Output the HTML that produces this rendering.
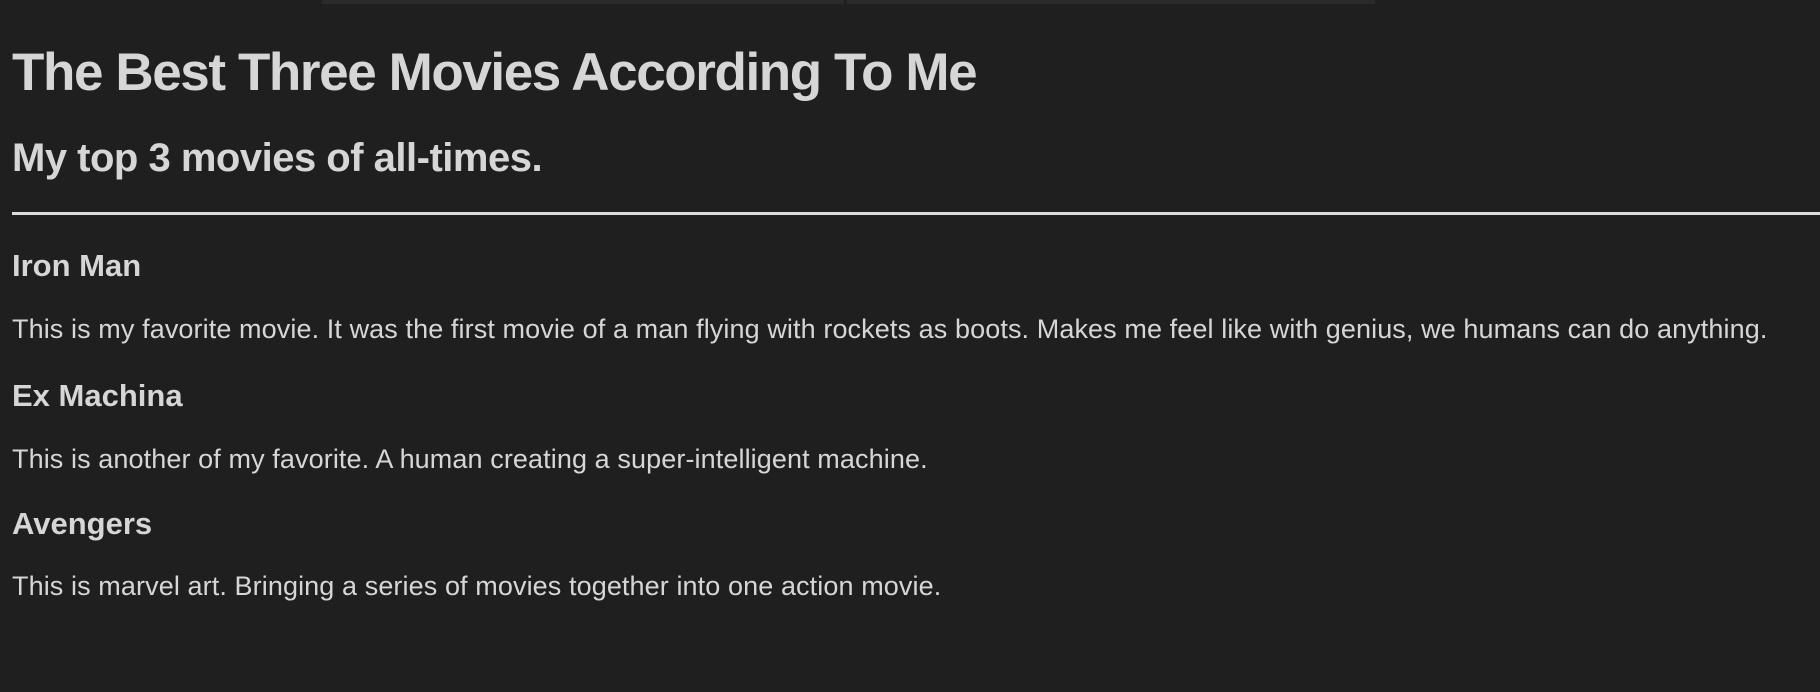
<!DOCTYPE html>
<html><head><meta charset="utf-8"><style>
html,body{margin:0;padding:0;background:#1f1f1f;width:1820px;height:692px;overflow:hidden;position:relative;font-family:"Liberation Sans",Arial,sans-serif;color:#d6d6d6}
.t{position:absolute;left:12px;line-height:1;white-space:nowrap}
.b{font-weight:bold}
</style></head><body>
<div style="position:absolute;left:322px;top:0;width:522px;height:4px;background:#2b2b2b"></div>
<div style="position:absolute;left:847px;top:0;width:528px;height:4px;background:#2b2b2b"></div>
<div class="t b" style="top:46px;font-size:53px;letter-spacing:-1.4px">The Best Three Movies According To Me</div>
<div class="t b" style="top:138px;font-size:40px;letter-spacing:-0.5px">My top 3 movies of all-times.</div>
<div style="position:absolute;left:12px;right:0;top:212px;height:3px;background:#dcdcdc"></div>
<div class="t b" style="top:250px;font-size:31px">Iron Man</div>
<div class="t" style="top:316px;font-size:27px;letter-spacing:0.1px">This is my favorite movie. It was the first movie of a man flying with rockets as boots. Makes me feel like with genius, we humans can do anything.</div>
<div class="t b" style="top:380px;font-size:31px">Ex Machina</div>
<div class="t" style="top:446px;font-size:27px;letter-spacing:0.1px">This is another of my favorite. A human creating a super-intelligent machine.</div>
<div class="t b" style="top:508px;font-size:31px">Avengers</div>
<div class="t" style="top:573px;font-size:27px;letter-spacing:0.1px">This is marvel art. Bringing a series of movies together into one action movie.</div>
</body></html>
